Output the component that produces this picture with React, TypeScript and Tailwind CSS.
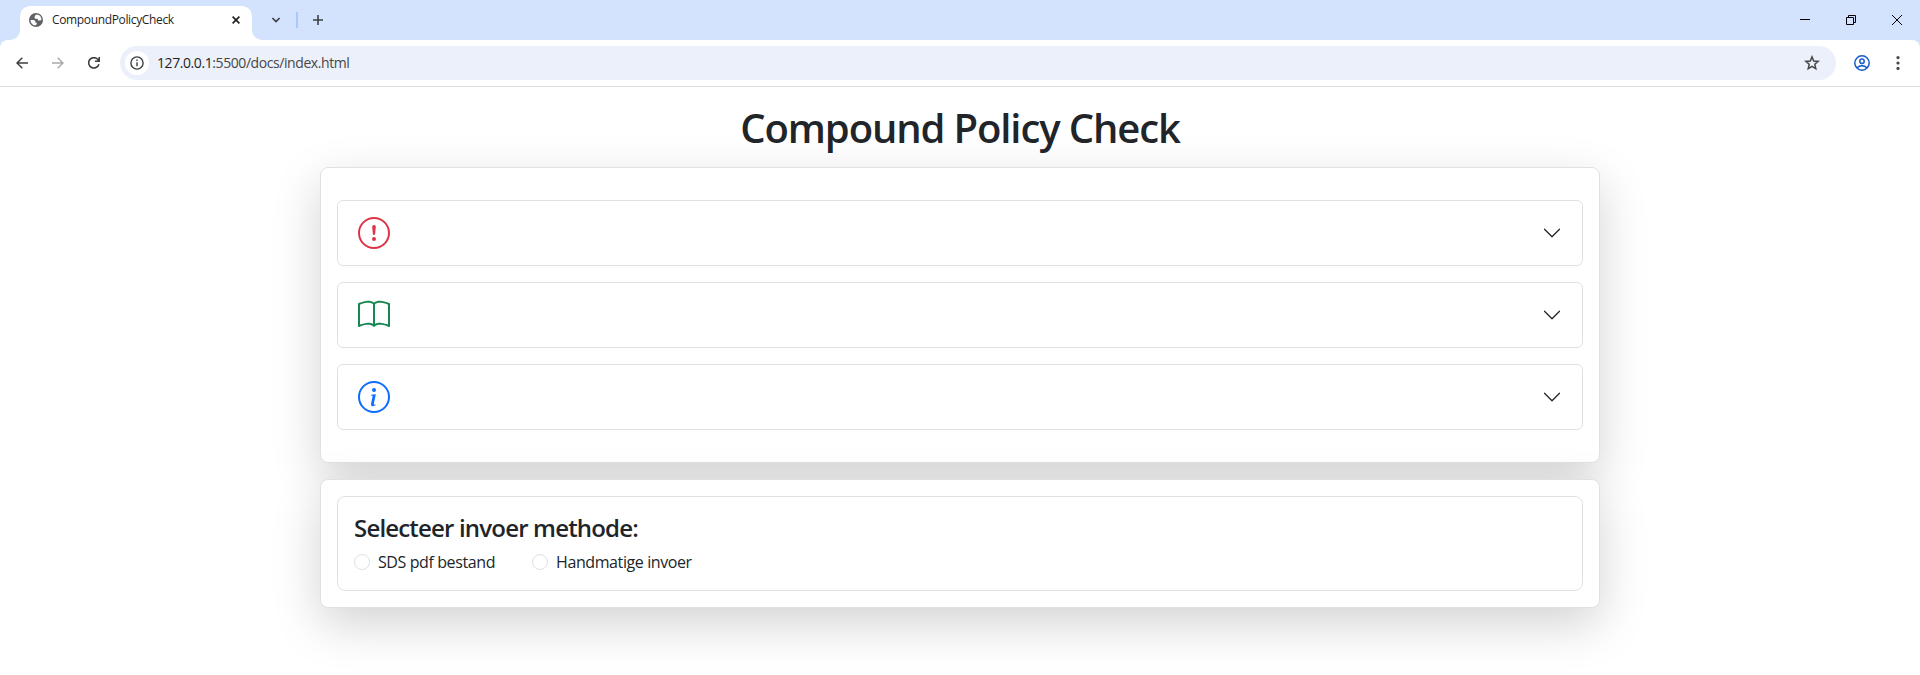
import { BsBook, BsExclamationCircle, BsInfoCircle } from 'react-icons/bs';
import type { ReactNode } from 'react';

function TabStrip() {
  return (
    <div className="flex h-10 bg-[#d3e3fd]">
      <svg className="mt-[30px] ml-[10px] h-[10px] w-[10px]" viewBox="0 0 10 10" fill="#fff">
        <path d="M10 0v10H0A10 10 0 0 0 10 0Z" />
      </svg>
      <div className="mt-1.5 flex h-[34px] w-[232px] items-center rounded-t-[10px] bg-white pb-[6px] pl-[9px]">
        <svg className="h-[14px] w-[14px]" viewBox="0 0 14 14">
          <circle cx="7" cy="7" r="7" fill="#5f6368" />
          <path d="M7.600 1.500Q5.600 2.200 5.500 4.200Q5.400 5.700 7 5.800H8Q9 5.900 9 7V7.600H11.200L12.500 6.800A5.500 5.500 0 0 0 7.600 1.500ZM1.500 7H4.300Q6.300 7.100 6.500 8.900V9.700H7.800V10.500Q7.700 11.400 6.500 12.400A5.500 5.500 0 0 1 1.500 7Z" fill="#fff" />
        </svg>
        <span className="ml-[9px] w-[140px] text-[12px] leading-4 tracking-[-0.35px] whitespace-nowrap text-[#1f1f1f]">CompoundPolicyCheck</span>
        <svg className="ml-[40px] h-2 w-2 shrink-0" viewBox="0 0 8 8" stroke="#1f1f1f" strokeWidth="1.6">
          <path d="m.6.6 6.8 6.8M7.4.6.6 7.4" />
        </svg>
      </div>
      <svg className="mt-[30px] h-[10px] w-[10px]" viewBox="0 0 10 10" fill="#fff">
        <path d="M0 0v10h10A10 10 0 0 1 0 0Z" />
      </svg>
      <svg className="mt-[16px] ml-[9px] h-2 w-[10px]" viewBox="0 0 10 8" fill="none" stroke="#3c4043" strokeWidth="1.7">
        <path d="m1.4 2 3.6 3.5L8.600 2" />
      </svg>
      <div className="mt-3 ml-[15px] h-4 w-[2px] bg-[#a8c7fa]" />
      <svg className="mt-[15px] ml-[15px] h-[10px] w-[10px]" viewBox="0 0 10 10" stroke="#3c4043" strokeWidth="1.6">
        <path d="M5 0v10M0 5h10" />
      </svg>
      <div className="mt-[15px] mr-[18px] ml-auto flex gap-9 text-black">
        <svg className="h-[10px] w-[10px]" viewBox="0 0 10 10" stroke="currentColor">
          <path d="M0 4.500h10" />
        </svg>
        <svg className="h-[10px] w-[10px]" viewBox="0 0 10 10" fill="none" stroke="currentColor">
          <path d="M.5 2.500h7v7h-7zM2.500 2.500v-2h7v7h-2" />
        </svg>
        <svg className="h-[10px] w-[10px]" viewBox="0 0 10 10" stroke="currentColor">
          <path d="m0 0 10 10M10 0 0 10" />
        </svg>
      </div>
    </div>
  );
}

function Toolbar() {
  return (
    <div className="bg-[#d3e3fd]">
      <div className="flex h-[47px] items-center rounded-t-lg border-b border-[#dcdee1] bg-white pl-4">
        <svg className="h-3 w-3" viewBox="0 0 12 12" fill="none" stroke="#3c4043" strokeWidth="1.5">
          <path d="M12 6H1M6.300.7 1 6l5.300 5.300" />
        </svg>
        <svg className="ml-6 h-3 w-3" viewBox="0 0 12 12" fill="none" stroke="#a9abad" strokeWidth="1.5">
          <path d="M0 6h11M5.700.7 11 6l-5.300 5.300" />
        </svg>
        <svg className="ml-6 h-3 w-3" viewBox="0 0 12 12" fill="none" stroke="#3c4043" strokeWidth="1.600">
          <path d="M10.900 7.200A5.200 5.200 0 1 1 9.700 2.300L11 3.700M11.200 0v4.300H6.900" />
        </svg>
        <div className="ml-5 flex h-[34px] w-[1716px] items-center rounded-full bg-[#ecf0fa] pl-[5px]">
          <div className="flex h-6 w-6 items-center justify-center rounded-full bg-white">
            <svg className="h-[14px] w-[14px]" viewBox="0 0 14 14" fill="none" stroke="#3c4043" strokeWidth="1.400">
              <circle cx="7" cy="7" r="6.100" />
              <path d="M7 6.200v4.100M7 3.600v1.500" />
            </svg>
          </div>
          <span className="ml-2 text-[14px] leading-5 tracking-[-0.42px] whitespace-nowrap text-[#474747]">
            <span className="text-[#1f1f1f]">127.0.0.1</span>:5500/docs/index.html
          </span>
          <svg className="mr-4 ml-auto h-4 w-4" viewBox="0 0 16 16" fill="none" stroke="#474747" strokeWidth="1.500">
            <path d="m8 1.900 1.700 4.100 4.500.4-3.400 2.900 1 4.300L8 11.300l-3.800 2.300 1-4.300-3.400-2.900 4.500-.4Z" />
          </svg>
        </div>
        <svg className="ml-[18px] h-4 w-4" viewBox="0 0 16 16" fill="none" stroke="#1a5bcb" strokeWidth="1.500">
          <circle cx="8" cy="8" r="7.200" />
          <circle cx="8" cy="6.300" r="2.200" />
          <path d="M2.900 12.900Q8 8.300 13.100 12.900" />
        </svg>
        <svg className="ml-[26px] h-[14px] w-1" viewBox="0 0 4 14" fill="#474747">
          <circle cx="2" cy="1.600" r="1.600" />
          <circle cx="2" cy="7" r="1.600" />
          <circle cx="2" cy="12.400" r="1.600" />
        </svg>
      </div>
    </div>
  );
}

function AccordionRow({ children }: { children: ReactNode }) {
  return (
    <button className="flex h-[66px] w-full items-center justify-between rounded-md border border-[#dee2e6] bg-white px-5">
      {children}
      <svg className="h-5 w-5" viewBox="0 0 16 16" fill="none" stroke="#212529" strokeLinecap="round" strokeLinejoin="round">
        <path d="m2 5 6 6 6-6" />
      </svg>
    </button>
  );
}

function RadioOption({ label }: { label: string }) {
  return (
    <label className="flex items-center">
      <input type="radio" name="method" className="h-4 w-4 appearance-none rounded-full border border-[#dee2e6] bg-white checked:border-[5px] checked:border-[#0d6efd]" />
      <span className="ml-2 text-[16px] leading-6 tracking-[-0.4px] whitespace-nowrap">{label}</span>
    </label>
  );
}

export default function App() {
  return (
    <div className="h-[675px] overflow-hidden bg-white font-['Open_Sans','Noto_Sans',sans-serif] text-[#212529]">
      <TabStrip />
      <Toolbar />
      <main className="mx-auto w-[1280px] pt-4">
        <h1 className="h-16 text-center text-[40px] leading-[50px] font-semibold tracking-[-1.12px]">Compound Policy Check</h1>
        <section className="flex h-[296px] flex-col gap-4 rounded-lg border border-[#dee2e6] bg-white px-4 py-8 shadow-[0_16px_48px_rgba(0,0,0,0.175)]">
          <AccordionRow><BsExclamationCircle className="h-8 w-8 text-[#dc3545]" /></AccordionRow>
          <AccordionRow><BsBook className="h-8 w-8 text-[#198754]" /></AccordionRow>
          <AccordionRow><BsInfoCircle className="h-8 w-8 text-[#0d6efd]" /></AccordionRow>
        </section>
        <section className="mt-4 h-[129px] rounded-lg border border-[#dee2e6] bg-white p-4 shadow-[0_16px_48px_rgba(0,0,0,0.175)]">
          <div className="h-[95px] rounded-lg border border-[#dee2e6] px-4 pt-4">
            <h2 className="text-[24px] leading-[30px] font-semibold tracking-[-0.82px]">Selecteer invoer methode:</h2>
            <div className="mt-[7px] flex">
              <div className="w-[178px]"><RadioOption label="SDS pdf bestand" /></div>
              <RadioOption label="Handmatige invoer" />
            </div>
          </div>
        </section>
      </main>
    </div>
  );
}
